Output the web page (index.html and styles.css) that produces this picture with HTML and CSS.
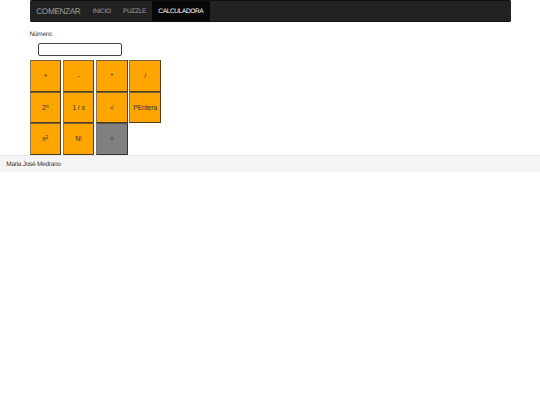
FILE: index.html
```
<!DOCTYPE html>
<html lang="es">
<head>
  <meta charset="UTF-8">
  <meta name="viewport" content="width=device-width, initial-scale=1.0">
  <title>Calculadora</title>
  <link rel="stylesheet" href="styles.css">
</head>
<body>

<div class="container">
  <nav class="navbar">
    <a class="brand" href="#">COMENZAR</a>
    <a class="link" href="#">INICIO</a>
    <a class="link" href="#">PUZZLE</a>
    <a class="link active" href="#">CALCULADORA</a>
  </nav>
  <label class="label" for="numero">Número:</label>
  <input class="numero" id="numero" type="text">
  <div class="teclas">
    <button class="tecla">+</button>
    <button class="tecla">-</button>
    <button class="tecla">*</button>
    <button class="tecla">/</button>
    <button class="tecla">2<sup>n</sup></button>
    <button class="tecla">1 / x</button>
    <button class="tecla">√</button>
    <button class="tecla">PEntera</button>
    <button class="tecla">x<sup>2</sup></button>
    <button class="tecla">N!</button>
    <button class="tecla igual">=</button>
  </div>
</div>
<footer class="footer">Maria José Medrano</footer>

</body>
</html>
```
FILE: styles.css
```
* {
  box-sizing: border-box;
}
body {
  margin: 0;
  background: #fff;
  color: #333;
  font-family: "Liberation Sans", Arial, sans-serif;
  font-size: 6.5px;
  letter-spacing: -0.27px;
  line-height: 8.44px;
  text-rendering: geometricPrecision;
}
.container {
  width: 481px;
  margin: 0 auto;
}
.navbar {
  display: flex;
  height: 22px;
  background: #222;
  border-top: 1px solid #101010;
  border-bottom: 1px solid #101010;
  border-radius: 1.7px;
  overflow: hidden;
}
.navbar a {
  padding: 6.6px 6.2px;
  color: #9d9d9d;
  text-decoration: none;
}
.navbar .brand {
  padding-left: 6.8px;
  font-size: 8.2px;
  letter-spacing: -0.34px;
}
.navbar .link {
  letter-spacing: -0.34px;
}
.navbar .active {
  background: #080808;
  color: #fff;
}
.label {
  display: block;
  margin-top: 9px;
}
.numero {
  display: block;
  width: 84px;
  height: 13px;
  margin: 3.5px 0 4px 8.5px;
  padding: 0 2px;
  border: 1px solid #444;
  border-radius: 2px;
  font: inherit;
}
.teclas {
  display: grid;
  grid-template-columns: repeat(4, 31.64px);
  grid-auto-rows: 31.64px;
  column-gap: 1.66px;
}
.tecla {
  padding: 1.4px 0 0;
  background: orange;
  border: 1px solid;
  border-color: #75603a #4d3c1c #4d3c1c #8a7a5c;
  color: #333;
  font: inherit;
  font-size: 6.7px;
  letter-spacing: -0.05px;
}
.igual {
  background: gray;
  border-color: #555 #333 #333 #777;
}
sup {
  position: relative;
  top: -0.4em;
  font-size: 75%;
  line-height: 0;
  vertical-align: baseline;
}
.footer {
  height: 17px;
  padding: 5px 6.3px 0;
  background: #f5f5f5;
  border-top: 1px solid #eaeaea;
}
```
